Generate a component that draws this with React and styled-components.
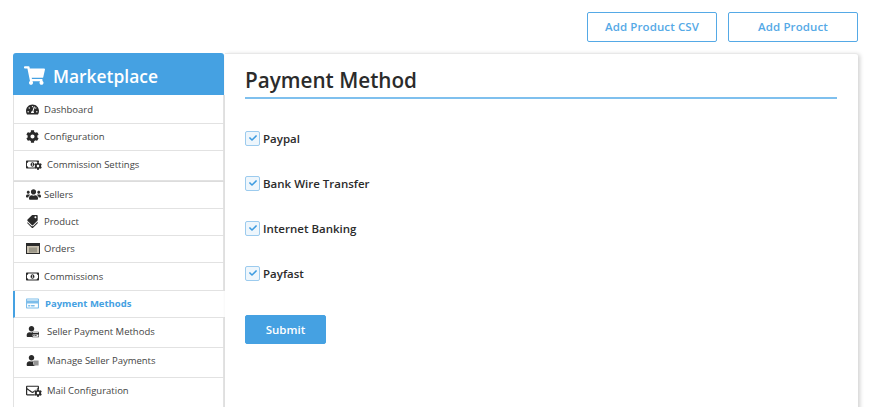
import React from "react";
import styled, { createGlobalStyle } from "styled-components";
import { FaShoppingCart, FaTachometerAlt, FaCog, FaRegMoneyBillAlt, FaUsers, FaTags, FaRegCreditCard, FaUser, FaRegEnvelope, FaCheck, FaBars } from "react-icons/fa";

const GlobalStyle = createGlobalStyle`
  html, body {
    margin: 0;
    padding: 0;
    background: #fff;
    font-family: "Open Sans", "Liberation Sans", sans-serif;
    overflow: hidden;
  }
`;

const Page = styled.div`
  width: 870px;
  height: 407px;
  box-sizing: border-box;
  padding: 12px 12px 0 13px;
  overflow: hidden;
`;

const TopBar = styled.div`
  display: flex;
  justify-content: flex-end;
  gap: 11px;
  margin-bottom: 11px;
`;

const OutlineButton = styled.button`
  width: 130px;
  height: 30px;
  box-sizing: border-box;
  background: #fff;
  border: 1px solid #55a9e6;
  border-radius: 2px;
  color: #55a9e6;
  font-family: inherit;
  font-size: 11.5px;
  font-weight: 600;
  letter-spacing: 0.1px;
  padding: 0 0 1px;
`;

const Panel = styled.div`
  display: flex;
  align-items: flex-start;
  height: 360px;
`;

const Sidebar = styled.nav`
  width: 212px;
  flex: none;
`;

const SideHeader = styled.div`
  height: 42px;
  margin-right: 1px;
  box-sizing: border-box;
  padding: 3px 0 0 11px;
  display: flex;
  align-items: center;
  gap: 8px;
  background: #45a1e2;
  border-radius: 3px 3px 0 0;
  color: #fff;
  font-size: 17.4px;
  font-weight: 600;
`;

const SideList = styled.div`
  display: flex;
  flex-direction: column;
`;

const Row = styled.div`
  height: ${(p) => p.$h}px;
  box-sizing: border-box;
  display: flex;
  align-items: center;
  padding-left: ${(p) => (p.$active ? 10 : 11)}px;
  padding-bottom: ${(p) => p.$pb}px;
  border-left: ${(p) => (p.$active ? "2px solid #45a1e2" : "1px solid #e2e2e2")};
  border-right: ${(p) => (p.$active ? "none" : "2px solid #e4e4e4")};
  border-bottom: 1px solid #e2e2e2;
  border-top: ${(p) => (p.$thick ? "1px solid #dcdcdc" : "none")};
  background: #fff;
  color: ${(p) => (p.$active ? "#45a1e2" : "#444")};
  font-size: 9.5px;
  font-weight: ${(p) => (p.$active ? 700 : 400)};
`;

const IconSlot = styled.span`
  position: relative;
  width: ${(p) => p.$w}px;
  flex: none;
  display: flex;
  align-items: center;
  padding-left: 1px;
  box-sizing: border-box;
  color: ${(p) => (p.$active ? "#7dbdea" : "#2a2a2a")};
  font-size: 13px;
  svg {
    transform: ${(p) => (p.$rot ? `rotate(${p.$rot}deg)` : "none")};
  }
`;

const SmallBadge = styled.span`
  position: absolute;
  left: ${(p) => p.$left}px;
  top: ${(p) => p.$top}px;
  display: flex;
  color: #2a2a2a;
  background: #fff;
  border-radius: 50%;
  font-size: ${(p) => p.$size}px;
`;

const Content = styled.main`
  flex: 1;
  height: 100%;
  box-sizing: border-box;
  padding: 11px 21px 0 20px;
  background: #fff;
  border-top: 1px solid #e8e8e8;
  border-radius: 0 3px 0 0;
  box-shadow: 2px 1px 4px rgba(0, 0, 0, 0.18);
`;

const Title = styled.h1`
  margin: 0 0 30px;
  height: 32px;
  line-height: 30px;
  border-bottom: 2px solid #7fc0ee;
  box-sizing: content-box;
  color: #2b2b2b;
  font-size: 20.7px;
  font-weight: 600;
`;

const MethodList = styled.div`
  display: flex;
  flex-direction: column;
  gap: 27px;
  margin-bottom: 33px;
`;

const Method = styled.label`
  display: flex;
  align-items: center;
  gap: 3px;
  height: 18px;
  color: #2b2b2b;
  font-size: 11.5px;
  font-weight: 600;
`;

const CheckBox = styled.span`
  width: 13px;
  height: 13px;
  display: flex;
  align-items: center;
  justify-content: center;
  background: #eef6fc;
  border: 1px solid #9ccbee;
  border-radius: 2px;
  color: #3d9be0;
  font-size: 8px;
`;

const SubmitButton = styled.button`
  display: block;
  width: 81px;
  height: 29px;
  padding: 0;
  background: #45a1e2;
  border: 1px solid #45a1e2;
  border-radius: 2px;
  color: #fff;
  font-family: inherit;
  font-size: 11.5px;
  font-weight: 600;
`;

const CardLines = () => (
  <svg width="14" height="11" viewBox="0 0 14 11" fill="none">
    <rect x="0.5" y="0.5" width="13" height="10" fill="#c9c1b0" stroke="#2a2a2a" />
    <rect x="1" y="1" width="12" height="2" fill="#2a2a2a" />
    <rect x="3" y="4.5" width="8" height="5" fill="#9b9788" />
  </svg>
);

const menu = [
  { label: "Dashboard", icon: <FaTachometerAlt />, w: 19, h: 29, pb: 0 },
  { label: "Configuration", icon: <FaCog />, w: 19, h: 27, pb: 2 },
  {
    label: "Commission Settings", w: 22, h: 30, pb: 3,
    icon: (
      <>
        <FaRegMoneyBillAlt />
        <SmallBadge $left={9} $top={4} $size={8}><FaCog /></SmallBadge>
      </>
    ),
  },
  { label: "Sellers", icon: <FaUsers size={15} />, w: 19, h: 28, pb: 2, thick: true },
  { label: "Product", icon: <FaTags />, rot: 90, w: 19, h: 27, pb: 2 },
  { label: "Orders", icon: <CardLines />, w: 19, h: 27, pb: 2 },
  { label: "Commissions", icon: <FaRegMoneyBillAlt />, w: 19, h: 28, pb: 1 },
  { label: "Payment Methods", icon: <FaRegCreditCard />, w: 20, h: 27, pb: 2, active: true },
  {
    label: "Seller Payment Methods", w: 22, h: 30, pb: 3,
    icon: (
      <>
        <FaUser size={11} />
        <SmallBadge $left={7} $top={5} $size={7}><FaRegCreditCard /></SmallBadge>
      </>
    ),
  },
  {
    label: "Manage Seller Payments", w: 22, h: 30, pb: 4,
    icon: (
      <>
        <FaUser size={11} />
        <SmallBadge $left={8} $top={5} $size={6}><FaBars /></SmallBadge>
      </>
    ),
  },
  {
    label: "Mail Configuration", w: 22, h: 30, pb: 5,
    icon: (
      <>
        <FaRegEnvelope />
        <SmallBadge $left={9} $top={5} $size={8}><FaCog /></SmallBadge>
      </>
    ),
  },
];

const methods = ["Paypal", "Bank Wire Transfer", "Internet Banking", "Payfast"];

export default function App() {
  return (
    <Page>
      <GlobalStyle />
      <TopBar>
        <OutlineButton>Add Product CSV</OutlineButton>
        <OutlineButton>Add Product</OutlineButton>
      </TopBar>
      <Panel>
        <Sidebar>
          <SideHeader>
            <FaShoppingCart size={21} />
            Marketplace
          </SideHeader>
          <SideList>
            {menu.map((item) => (
              <Row key={item.label} $h={item.h} $pb={item.pb} $active={item.active} $thick={item.thick}>
                <IconSlot $w={item.w} $active={item.active} $rot={item.rot}>{item.icon}</IconSlot>
                {item.label}
              </Row>
            ))}
          </SideList>
        </Sidebar>
        <Content>
          <Title>Payment Method</Title>
          <MethodList>
            {methods.map((m) => (
              <Method key={m}>
                <CheckBox><FaCheck /></CheckBox>
                {m}
              </Method>
            ))}
          </MethodList>
          <SubmitButton>Submit</SubmitButton>
        </Content>
      </Panel>
    </Page>
  );
}
